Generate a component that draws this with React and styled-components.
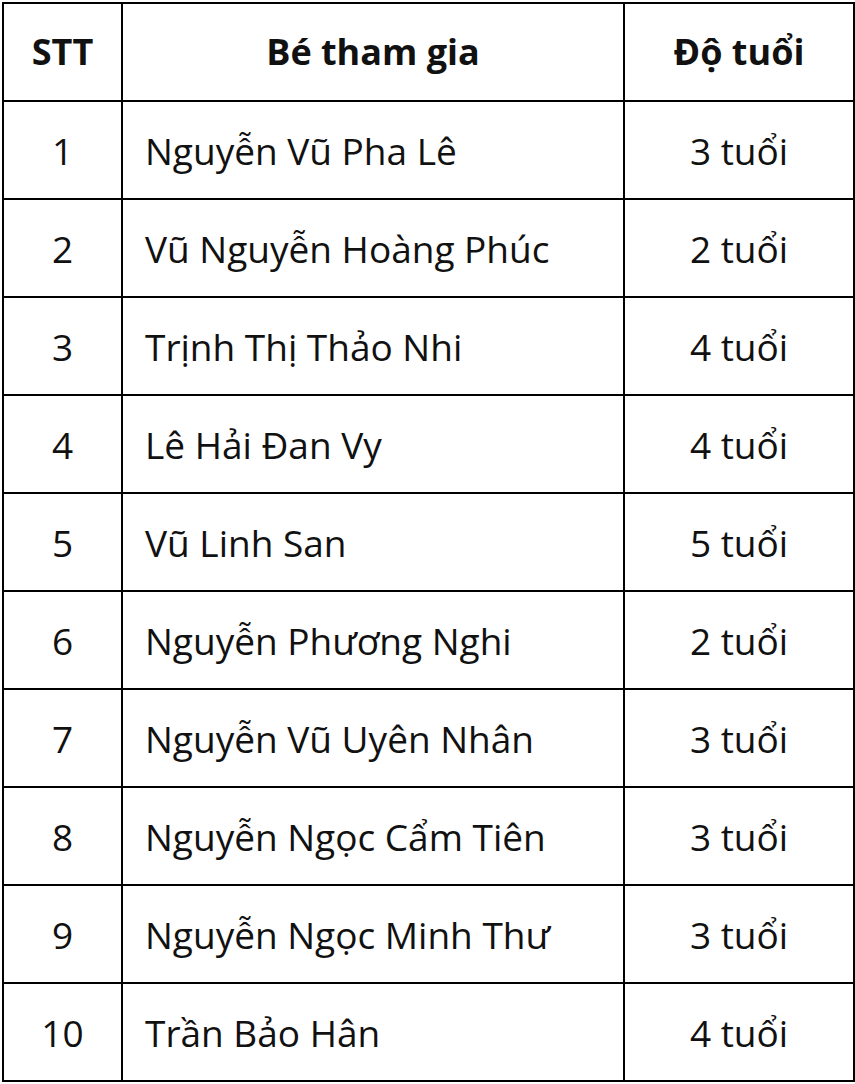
import React from "react";
import styled, { createGlobalStyle } from "styled-components";

const GlobalStyle = createGlobalStyle`
    html, body {
        margin: 0;
        padding: 0;
        background: #ffffff;
    }
    body {
        font-family: "Open Sans", "Noto Sans", sans-serif;
        color: #111111;
    }
`;

const Page = styled.div`
    width: 855px;
    height: 1084px;
    padding: 2px 0 0 2px;
    box-sizing: border-box;
`;

const Table = styled.table`
    width: 851px;
    border-collapse: collapse;
    table-layout: fixed;
`;

const Cell = styled.td`
    height: 96px;
    padding: 0 0 0 ${(p) => (p.$align === "left" ? "22px" : "0")};
    box-sizing: content-box;
    border: 2px solid #000;
    text-align: ${(p) => p.$align || "center"};
    vertical-align: middle;
    font-size: ${(p) => (p.$head ? "36px" : "37px")};
    font-weight: ${(p) => (p.$head ? 700 : 400)};
    line-height: 1;
    white-space: nowrap;
`;

const rows = [
    ["1", "Nguyễn Vũ Pha Lê", "3 tuổi"],
    ["2", "Vũ Nguyễn Hoàng Phúc", "2 tuổi"],
    ["3", "Trịnh Thị Thảo Nhi", "4 tuổi"],
    ["4", "Lê Hải Đan Vy", "4 tuổi"],
    ["5", "Vũ Linh San", "5 tuổi"],
    ["6", "Nguyễn Phương Nghi", "2 tuổi"],
    ["7", "Nguyễn Vũ Uyên Nhân", "3 tuổi"],
    ["8", "Nguyễn Ngọc Cẩm Tiên", "3 tuổi"],
    ["9", "Nguyễn Ngọc Minh Thư", "3 tuổi"],
    ["10", "Trần Bảo Hân", "4 tuổi"],
];

const App = () => {
    return (
        <Page>
            <GlobalStyle />
            <Table>
                <colgroup>
                    <col style={{ width: "119px" }} />
                    <col style={{ width: "502px" }} />
                    <col style={{ width: "230px" }} />
                </colgroup>
                <thead>
                    <tr>
                        <Cell as="th" $head>STT</Cell>
                        <Cell as="th" $head>Bé tham gia</Cell>
                        <Cell as="th" $head>Độ tuổi</Cell>
                    </tr>
                </thead>
                <tbody>
                    {rows.map(([stt, name, age]) => (
                        <tr key={stt}>
                            <Cell>{stt}</Cell>
                            <Cell $align="left">{name}</Cell>
                            <Cell>{age}</Cell>
                        </tr>
                    ))}
                </tbody>
            </Table>
        </Page>
    );
};

export default App;
